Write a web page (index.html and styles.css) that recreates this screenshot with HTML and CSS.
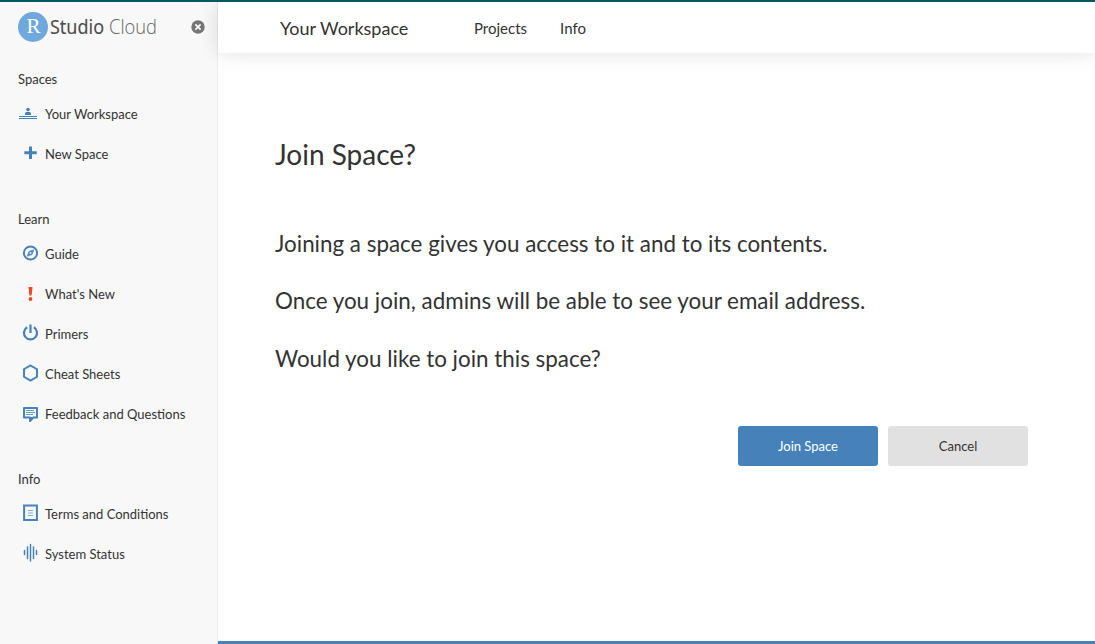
FILE: index.html
```html
<!DOCTYPE html>
<html lang="en">
<head>
<meta charset="utf-8">
<title>Join Space</title>
<link rel="stylesheet" href="styles.css">
</head>
<body>
<div class="app">
  <aside class="sidebar">
    <div class="brand">
      <svg class="logo" width="142" height="32" viewBox="0 0 142 32" role="img" aria-label="RStudio Cloud">
        <circle cx="15" cy="16" r="15" fill="#6fa8dc"/>
        <text class="logo-r" x="8.5" y="22" textLength="14" lengthAdjust="spacingAndGlyphs">R</text>
        <text class="logo-studio" x="32" y="23" textLength="54" lengthAdjust="spacingAndGlyphs">Studio</text>
        <text class="logo-cloud" x="91" y="23" textLength="48" lengthAdjust="spacingAndGlyphs">Cloud</text>
      </svg>
      <svg class="close" width="14" height="14" viewBox="0 0 14 14"><circle cx="7" cy="7" r="6.7" fill="#757575"/><path d="M4.400 4.400l5.200 5.200M9.600 4.400l-5.200 5.200" stroke="#fff" stroke-width="1.600"/></svg>
    </div>
    <nav class="group">
      <h2 class="label">Spaces</h2>
      <a class="item"><svg class="icon" viewBox="0 0 20 20"><path d="M1 13.500h18M1 15.500h18" stroke="#4682b9" stroke-width="1.100"/><circle cx="10" cy="6.600" r="1.800" fill="#4682b9"/><path d="M7 12v-1.500Q7 9 8.500 9h3Q13 9 13 10.500V12z" fill="#4682b9"/></svg>Your Workspace</a>
      <a class="item"><svg class="icon" viewBox="0 0 20 20"><path d="M12.500 3.500v12.500M6.300 9.750h12.400" stroke="#4682b9" stroke-width="3"/></svg>New Space</a>
    </nav>
    <nav class="group">
      <h2 class="label">Learn</h2>
      <a class="item"><svg class="icon" viewBox="0 0 20 20"><circle cx="12.500" cy="10" r="6.600" fill="none" stroke="#4682b9" stroke-width="2"/><path d="M15.800 6.700l-1.700 4.900-4.900 1.700 1.700-4.900z" fill="#4682b9" stroke="#4682b9" stroke-width=".5"/><circle cx="12.500" cy="10" r="1" fill="#f8f8f8"/></svg>Guide</a>
      <a class="item"><svg class="icon" viewBox="0 0 20 20"><path d="M10.500 4h4l-.9 8.500h-2.200z" fill="#f44225"/><circle cx="12.500" cy="16" r="1.900" fill="#f44225"/></svg>What's New</a>
      <a class="item"><svg class="icon" viewBox="0 0 20 20"><path d="M9.200 4.300a6.500 6.500 0 1 0 6.600 0" fill="none" stroke="#4682b9" stroke-width="2.200"/><path d="M12.500 1.500v8.500" stroke="#4682b9" stroke-width="2.200"/></svg>Primers</a>
      <a class="item"><svg class="icon" viewBox="0 0 20 20"><path d="M12.500 2.500l6.500 3.750v7.500l-6.500 3.750L6 13.750v-7.500z" fill="none" stroke="#4682b9" stroke-width="2"/></svg>Cheat Sheets</a>
      <a class="item"><svg class="icon" viewBox="0 0 20 20"><path d="M6 5h13v9.500h-3.700l-3.300 3.500v-3.500H6z" fill="none" stroke="#4682b9" stroke-width="2" stroke-linejoin="round"/><path d="M12 14h4l-4 4.300z" fill="#4682b9"/><path d="M8 7.500h8M8 9.500h9M8 11.500h7" stroke="#4682b9" stroke-width=".8"/></svg>Feedback and Questions</a>
    </nav>
    <nav class="group">
      <h2 class="label">Info</h2>
      <a class="item"><svg class="icon" viewBox="0 0 20 20"><path d="M6.100 2.600h12.800v14.300H6.100z" fill="none" stroke="#4682b9" stroke-width="2"/><path d="M10 7.500h5M10 10h5M10 12.500h5" stroke="#82abd0"/></svg>Terms and Conditions</a>
      <a class="item"><svg class="icon" viewBox="0 0 20 20"><path d="M6.500 7.500v4M9.500 4v11.500M12.500 1.500v16.500M15.500 4v11.500M18.500 7.500v4" stroke="#4682b9" stroke-width="1.500" stroke-linecap="round"/></svg>System Status</a>
    </nav>
  </aside>
  <main class="main">
    <header class="topbar">
      <span class="workspace">Your Workspace</span>
      <a class="tab">Projects</a>
      <a class="tab">Info</a>
    </header>
    <section class="content">
      <h1 class="title">Join Space?</h1>
      <p class="text">Joining a space gives you access to it and to its contents.</p>
      <p class="text">Once you join, admins will be able to see your email address.</p>
      <p class="text">Would you like to join this space?</p>
      <div class="actions">
        <button class="button primary">Join Space</button>
        <button class="button">Cancel</button>
      </div>
    </section>
  </main>
</div>
</body>
</html>
```
FILE: styles.css
```css
* { box-sizing: border-box; }
body { margin: 0; font-family: Lato, sans-serif; color: #333; background: #fff; }
.app { display: flex; height: 644px; border-top: 2px solid #005a5f; overflow: hidden; }
.sidebar { width: 218px; flex: none; background: #f8f8f8; border-right: 1px solid #ececec; }
.brand { height: 62px; display: flex; align-items: flex-start; justify-content: space-between; padding: 9px 12px 0 18px; }
.logo { overflow: visible; }
.close { margin-top: 9px; }
.logo-r { font: 21px "Liberation Serif", serif; fill: #fff; }
.logo-studio { font: 20px "Noto Sans", sans-serif; fill: #4d4d4d; stroke: #4d4d4d; stroke-width: .1px; }
.logo-cloud { font: 300 20px "Open Sans", sans-serif; fill: #666; }
.group { margin-bottom: 30px; }
.label { margin: 0; padding-left: 18px; font-size: 13px; font-weight: 400; line-height: 30px; }
.item { display: flex; align-items: center; height: 40px; padding-left: 18px; font-size: 13px; }
.icon { width: 20px; height: 20px; margin: 0 7px 2px 0; flex: none; }
.main { flex: 1; display: flex; flex-direction: column; border-bottom: 3px solid #4682b9; }
.topbar { display: flex; align-items: center; flex: none; height: 51px; padding: 1px 0 0 62px; box-shadow: 0 0 20px rgba(0, 0, 0, .13); }
.workspace { width: 194px; font-size: 18px; }
.tab { font-size: 15px; margin-right: 33px; }
.content { padding: 84px 67px 0 57px; }
.title { margin: 0 0 59px; font-size: 28px; font-weight: 400; line-height: 34px; }
.text { margin: 0 0 29.400px; font-size: 22.400px; line-height: 28px; }
.actions { display: flex; justify-content: flex-end; gap: 10px; margin-top: 53px; }
.button { width: 140px; height: 40px; border: 0; border-radius: 3px; background: #e1e1e1; color: #333; font: 13px Lato, sans-serif; }
.primary { background: #4682b9; color: #fff; }
```
